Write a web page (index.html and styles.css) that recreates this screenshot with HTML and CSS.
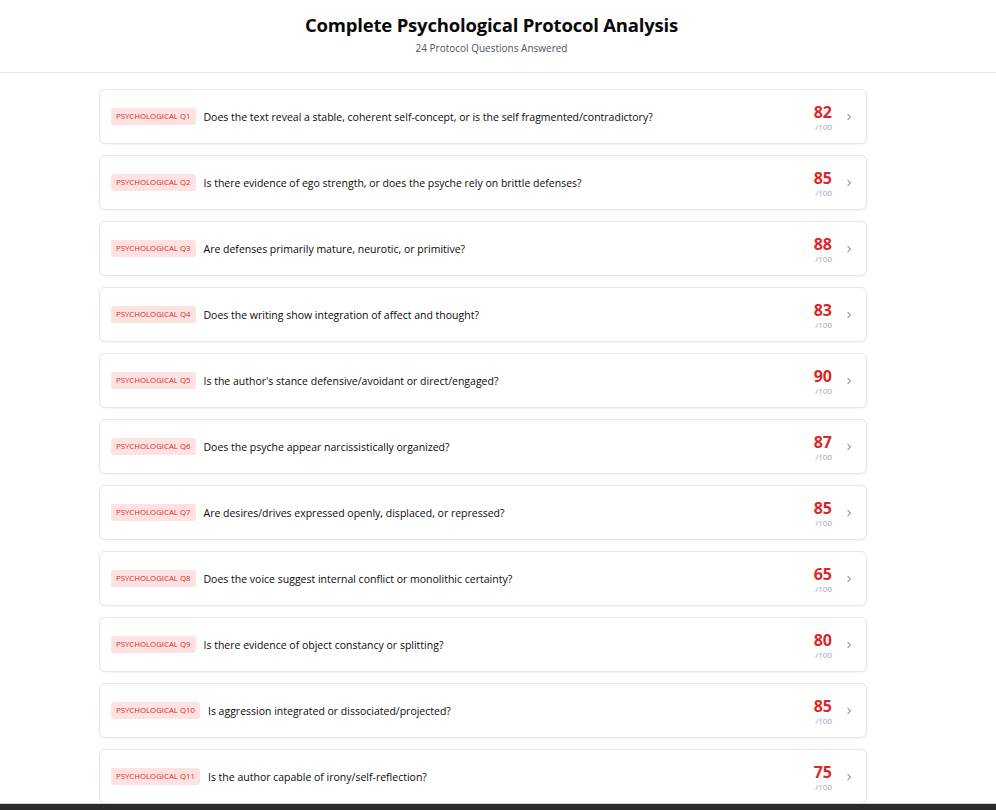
FILE: index.html
```html
<!DOCTYPE html>
<html lang="en">
<head>
<meta charset="utf-8">
<title>Complete Psychological Protocol Analysis</title>
<link rel="stylesheet" href="styles.css">
</head>
<body>
<header class="page-header">
  <h1 class="title">Complete Psychological Protocol Analysis</h1>
  <p class="subtitle">24 Protocol Questions Answered</p>
</header>
<main class="list">
  <div class="card"><span class="badge">Psychological Q1</span><span class="question">Does the text reveal a stable, coherent self-concept, or is the self fragmented/contradictory?</span><div class="score"><span class="num">82</span><span class="max">/100</span></div><svg class="chev" viewBox="0 0 10 10"><path d="M3.5 2 L6.5 5 L3.5 8"/></svg></div>
  <div class="card"><span class="badge">Psychological Q2</span><span class="question">Is there evidence of ego strength, or does the psyche rely on brittle defenses?</span><div class="score"><span class="num">85</span><span class="max">/100</span></div><svg class="chev" viewBox="0 0 10 10"><path d="M3.5 2 L6.5 5 L3.5 8"/></svg></div>
  <div class="card"><span class="badge">Psychological Q3</span><span class="question">Are defenses primarily mature, neurotic, or primitive?</span><div class="score"><span class="num">88</span><span class="max">/100</span></div><svg class="chev" viewBox="0 0 10 10"><path d="M3.5 2 L6.5 5 L3.5 8"/></svg></div>
  <div class="card"><span class="badge">Psychological Q4</span><span class="question">Does the writing show integration of affect and thought?</span><div class="score"><span class="num">83</span><span class="max">/100</span></div><svg class="chev" viewBox="0 0 10 10"><path d="M3.5 2 L6.5 5 L3.5 8"/></svg></div>
  <div class="card"><span class="badge">Psychological Q5</span><span class="question">Is the author's stance defensive/avoidant or direct/engaged?</span><div class="score"><span class="num">90</span><span class="max">/100</span></div><svg class="chev" viewBox="0 0 10 10"><path d="M3.5 2 L6.5 5 L3.5 8"/></svg></div>
  <div class="card"><span class="badge">Psychological Q6</span><span class="question">Does the psyche appear narcissistically organized?</span><div class="score"><span class="num">87</span><span class="max">/100</span></div><svg class="chev" viewBox="0 0 10 10"><path d="M3.5 2 L6.5 5 L3.5 8"/></svg></div>
  <div class="card"><span class="badge">Psychological Q7</span><span class="question">Are desires/drives expressed openly, displaced, or repressed?</span><div class="score"><span class="num">85</span><span class="max">/100</span></div><svg class="chev" viewBox="0 0 10 10"><path d="M3.5 2 L6.5 5 L3.5 8"/></svg></div>
  <div class="card"><span class="badge">Psychological Q8</span><span class="question">Does the voice suggest internal conflict or monolithic certainty?</span><div class="score"><span class="num">65</span><span class="max">/100</span></div><svg class="chev" viewBox="0 0 10 10"><path d="M3.5 2 L6.5 5 L3.5 8"/></svg></div>
  <div class="card"><span class="badge">Psychological Q9</span><span class="question">Is there evidence of object constancy or splitting?</span><div class="score"><span class="num">80</span><span class="max">/100</span></div><svg class="chev" viewBox="0 0 10 10"><path d="M3.5 2 L6.5 5 L3.5 8"/></svg></div>
  <div class="card"><span class="badge">Psychological Q10</span><span class="question">Is aggression integrated or dissociated/projected?</span><div class="score"><span class="num">85</span><span class="max">/100</span></div><svg class="chev" viewBox="0 0 10 10"><path d="M3.5 2 L6.5 5 L3.5 8"/></svg></div>
  <div class="card"><span class="badge">Psychological Q11</span><span class="question">Is the author capable of irony/self-reflection?</span><div class="score"><span class="num">75</span><span class="max">/100</span></div><svg class="chev" viewBox="0 0 10 10"><path d="M3.5 2 L6.5 5 L3.5 8"/></svg></div>
</main>
<div class="bottom-bar"></div>
</body>
</html>
```
FILE: styles.css
```css
* { box-sizing: border-box; }
html, body { margin: 0; padding: 0; background: #ffffff; }
body {
  font-family: "Open Sans", "Noto Sans", "Liberation Sans", sans-serif;
  color: #111827;
  overflow: hidden;
  height: 810px;
}
.page-header {
  height: 73px;
  border-bottom: 1px solid #e5e7eb;
  display: flex;
  flex-direction: column;
  align-items: center;
  padding: 11px 13px 0 0;
}
.title {
  margin: 0;
  font-size: 18.5px;
  line-height: 27px;
  font-weight: 700;
  color: #0a0a0a;
  letter-spacing: -0.2px;
}
.subtitle {
  margin: 3px 0 0;
  font-size: 10px;
  line-height: 14px;
  color: #4b5563;
}
.list {
  display: flex;
  flex-direction: column;
  gap: 11px;
  padding: 16px 129px 0 99px;
}
.card {
  display: flex;
  align-items: center;
  height: 55px;
  padding: 0 12px 0 11px;
  border: 1px solid #e5e7eb;
  border-radius: 6px;
  background: #fff;
  box-shadow: 0 1px 2px rgba(0,0,0,0.05);
}
.badge {
  flex: none;
  background: #fee2e2;
  color: #dc2626;
  font-size: 7.8px;
  line-height: 17px;
  height: 17px;
  padding: 0 5px;
  border-radius: 3px;
  text-transform: uppercase;
}
.question {
  flex: 1;
  margin-left: 8px;
  font-size: 10.5px;
  color: #0a0a0a;
  white-space: nowrap;
}
.score {
  flex: none;
  display: flex;
  flex-direction: column;
  align-items: flex-end;
  padding-top: 3px;
  margin-right: 12px;
}
.num {
  font-size: 16px;
  line-height: 18px;
  font-weight: 700;
  color: #dc2626;
}
.max {
  font-size: 8px;
  line-height: 12px;
  color: #9ca3af;
}
.chev {
  width: 10px;
  height: 10px;
  flex: none;
}
.chev path {
  fill: none;
  stroke: #9ca3af;
  stroke-width: 1.2;
}
.bottom-bar {
  position: fixed;
  left: 0;
  right: 0;
  bottom: 0;
  height: 7px;
  background: #2b2b2b;
  border-top: 1px solid #d1d5db;
}
```
